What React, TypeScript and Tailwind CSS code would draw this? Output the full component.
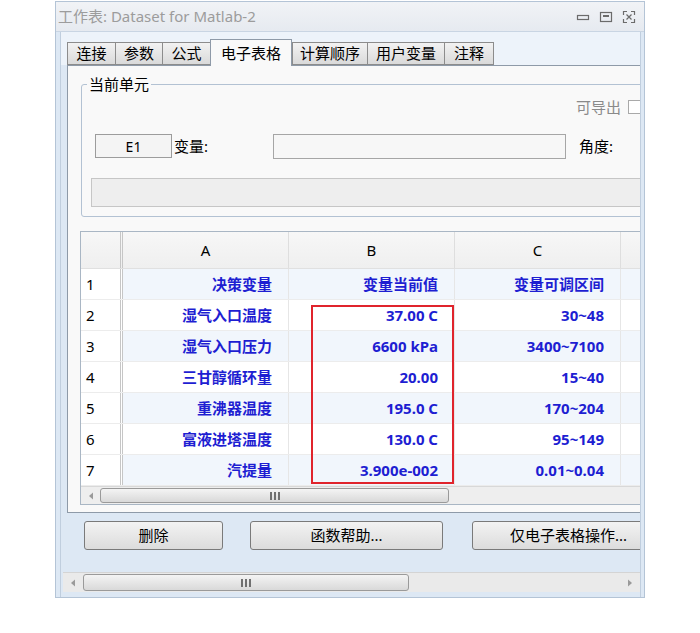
import React from 'react';

const font = { fontFamily: '"Noto Sans", "Noto Sans CJK SC", sans-serif' };

type Row = { n: number; a: string; b: string; c: string };

const rows: Row[] = [
  { n: 1, a: '决策变量', b: '变量当前值', c: '变量可调区间' },
  { n: 2, a: '湿气入口温度', b: '37.00 C', c: '30~48' },
  { n: 3, a: '湿气入口压力', b: '6600 kPa', c: '3400~7100' },
  { n: 4, a: '三甘醇循环量', b: '20.00', c: '15~40' },
  { n: 5, a: '重沸器温度', b: '195.0 C', c: '170~204' },
  { n: 6, a: '富液进塔温度', b: '130.0 C', c: '95~149' },
  { n: 7, a: '汽提量', b: '3.900e-002', c: '0.01~0.04' },
];

const tabs = [
  { t: '连接', w: 'w-[48px]' },
  { t: '参数', w: 'w-[47px]' },
  { t: '公式', w: 'w-[48px]' },
  { t: '电子表格', w: 'w-[82px]' },
  { t: '计算顺序', w: 'w-[75px]' },
  { t: '用户变量', w: 'w-[77px]' },
  { t: '注释', w: 'w-[50px]' },
];

const WinButtons = () => (
  <div className="flex items-center gap-[9px] mr-[8px]">
    <svg width="14" height="14" viewBox="0 0 14 14">
      <rect x="1.5" y="5.5" width="11" height="4" fill="none" stroke="#6b6b6b" strokeWidth="1.2" />
    </svg>
    <svg width="14" height="14" viewBox="0 0 14 14">
      <rect x="1.5" y="2.5" width="11" height="9" fill="none" stroke="#6b6b6b" strokeWidth="1.2" />
      <rect x="4" y="5" width="6" height="2" fill="#6b6b6b" />
    </svg>
    <svg width="14" height="14" viewBox="0 0 14 14" fill="none" stroke="#6b6b6b" strokeWidth="1.2">
      <path d="M1.5 5V1.5H5M9 1.5h3.5V5M12.5 9v3.5H9M5 12.5H1.5V9" />
      <path d="M4.5 4.5l5 5M9.5 4.5l-5 5" />
    </svg>
  </div>
);

const Arrow = ({ dir }: { dir: 'l' | 'r' }) => (
  <svg width="6" height="8" viewBox="0 0 6 8">
    {dir === 'l' ? <path d="M5 0.5L1 4l4 3.5z" fill="#9a9a9a" /> : <path d="M1 0.5L5 4l-4 3.5z" fill="#9a9a9a" />}
  </svg>
);

const Grip = () => (
  <div className="flex gap-[2px]">
    <span className="w-[2px] h-[8px] bg-[#707070]" />
    <span className="w-[2px] h-[8px] bg-[#707070]" />
    <span className="w-[2px] h-[8px] bg-[#707070]" />
  </div>
);

export default function App() {
  return (
    <div className="w-[700px] h-[633px] bg-white pt-[1px] pl-[55px]" style={font}>
      <div className="w-[590px] h-[597px] flex flex-col border border-[#b4c4d6] bg-[#dde8f4]">
        {/* title bar */}
        <div className="h-[30px] flex items-center justify-between bg-gradient-to-b from-[#f1f3f6] to-[#e6eaf0] border-b border-[#c9d5e3]">
          <span className="pl-[2px] text-[15px] text-[#9c9c9c] leading-none">工作表: Dataset for Matlab-2</span>
          <WinButtons />
        </div>

        {/* client */}
        <div className="flex-1 flex flex-col ml-[4px] mr-[3px] overflow-hidden border-l border-r border-[#c0cede]">
          <div className="h-[33px] bg-[#edf3fa] shrink-0 relative">
            <div className="absolute left-[6px] bottom-0 flex items-end">
              {tabs.map(({ t, w }) => {
                const active = t === '电子表格';
                return active ? (
                  <div
                    key={t}
                    className={`${w} h-[27px] flex items-center justify-center border border-b-0 border-[#8e9aa8] bg-[#f9f9f9] text-[15px] text-black relative top-[1px] z-10`}
                  >
                    {t}
                  </div>
                ) : (
                  <div
                    key={t}
                    className={`${w} h-[23px] flex items-center justify-center border border-r-0 last:border-r border-[#8c8c8c] bg-gradient-to-b from-[#f2f2f2] to-[#dadada] text-[15px] text-black`}
                  >
                    {t}
                  </div>
                );
              })}
            </div>
          </div>

          {/* tab panel */}
          <div className="ml-[6px] w-[620px] h-[448px] shrink-0 border border-[#8e9aa8] bg-[#f9f9f9] pt-[18px] pl-[13px]">
            {/* group box */}
            <div className="relative w-[600px] h-[133px] border border-[#b3c2d3] rounded-[3px]">
              <span className="absolute -top-[11px] left-[5px] px-[2px] bg-[#f9f9f9] text-[15px] text-black leading-[20px]">当前单元</span>
              <div className="flex items-center pt-[11px] pl-[494px]">
                <span className="text-[15px] text-[#8a8a8a]">可导出</span>
                <span className="ml-[7px] w-[14px] h-[14px] border border-[#a9a9a9] bg-white" />
              </div>
              <div className="flex items-center mt-[15px] pl-[13px]">
                <div className="w-[77px] h-[24px] border border-[#9c9c9c] bg-[#f4f4f4] flex items-center justify-center text-[14px]">E1</div>
                <span className="ml-[2px] w-[99px] text-[15px]">变量:</span>
                <div className="w-[293px] h-[25px] border border-[#a6a6a6] bg-[#f7f7f7]" />
                <span className="ml-[13px] text-[15px]">角度:</span>
              </div>
              <div className="ml-[9px] mt-[19px] w-[600px] h-[29px] border border-[#c6c6c6] bg-[#eeeeee]" />
            </div>

            {/* grid */}
            <div className="relative mt-[14px] -ml-[1px] w-[600px] border border-[#a9b6c4] bg-white">
              <div className="flex h-[37px] bg-gradient-to-b from-[#f7f7f7] to-[#efefef] border-b border-[#e0e0e0]">
                <div className="w-[42px] shrink-0 border-r-[3px] border-double border-[#c6c6c6]" />
                {['A', 'B', 'C', ''].map((h, i) => (
                  <div key={i} className="w-[166px] shrink-0 border-r border-[#dedede] flex items-center justify-center text-[15px]">
                    {h}
                  </div>
                ))}
              </div>
              {rows.map((r) => (
                <div key={r.n} className={`flex h-[31px] border-b border-[#ececec] ${r.n % 2 === 1 ? 'bg-[#f1f6fc]' : 'bg-white'}`}>
                  <div className="w-[42px] shrink-0 bg-white border-r-[3px] border-double border-[#c6c6c6] flex items-center pl-[5px] text-[15px]">
                    {r.n}
                  </div>
                  {[r.a, r.b, r.c, ''].map((v, i) => (
                    <div
                      key={i}
                      className="w-[166px] shrink-0 border-r border-[#e6e6e6] flex items-center justify-end pr-[16px] text-[15px] font-bold text-[#1e1ed2]"
                    >
                      {v}
                    </div>
                  ))}
                </div>
              ))}
              {/* inner hscroll */}
              <div className="flex items-center h-[18px] bg-[#eeeeee] border-t border-[#d8d8d8]">
                <div className="w-[19px] flex justify-center">
                  <Arrow dir="l" />
                </div>
                <div className="w-[349px] h-[15px] rounded-[3px] border border-[#9a9a9a] bg-gradient-to-b from-[#f4f4f4] to-[#d9d9d9] flex items-center justify-center">
                  <Grip />
                </div>
              </div>
              {/* highlight box */}
              <div className="absolute left-[230px] top-[73px] w-[143px] h-[179px] border-2 border-[#e0242c]" />
            </div>
          </div>

          {/* buttons */}
          <div className="flex mt-[8px] pl-[23px] shrink-0">
            {[
              { t: '删除', w: 'w-[139px]' },
              { t: '函数帮助...', w: 'w-[193px] ml-[27px]' },
              { t: '仅电子表格操作...', w: 'w-[193px] ml-[29px]' },
            ].map((b) => (
              <div
                key={b.t}
                className={`${b.w} shrink-0 h-[29px] rounded-[3px] border border-[#7a7a7a] bg-gradient-to-b from-[#f3f3f3] to-[#dcdcdc] flex items-center justify-center text-[15px]`}
              >
                {b.t}
              </div>
            ))}
          </div>

          {/* outer hscroll */}
          <div className="mt-[22px] ml-[2px] h-[20px] flex items-center bg-[#eaeaea] border-t border-[#d4d4d4] shrink-0">
            <div className="w-[20px] flex justify-center">
              <Arrow dir="l" />
            </div>
            <div className="w-[326px] h-[17px] rounded-[3px] border border-[#9a9a9a] bg-gradient-to-b from-[#f4f4f4] to-[#d9d9d9] flex items-center justify-center">
              <Grip />
            </div>
            <div className="flex-1" />
            <div className="w-[20px] flex justify-center">
              <Arrow dir="r" />
            </div>
          </div>
        </div>
      </div>
    </div>
  );
}
